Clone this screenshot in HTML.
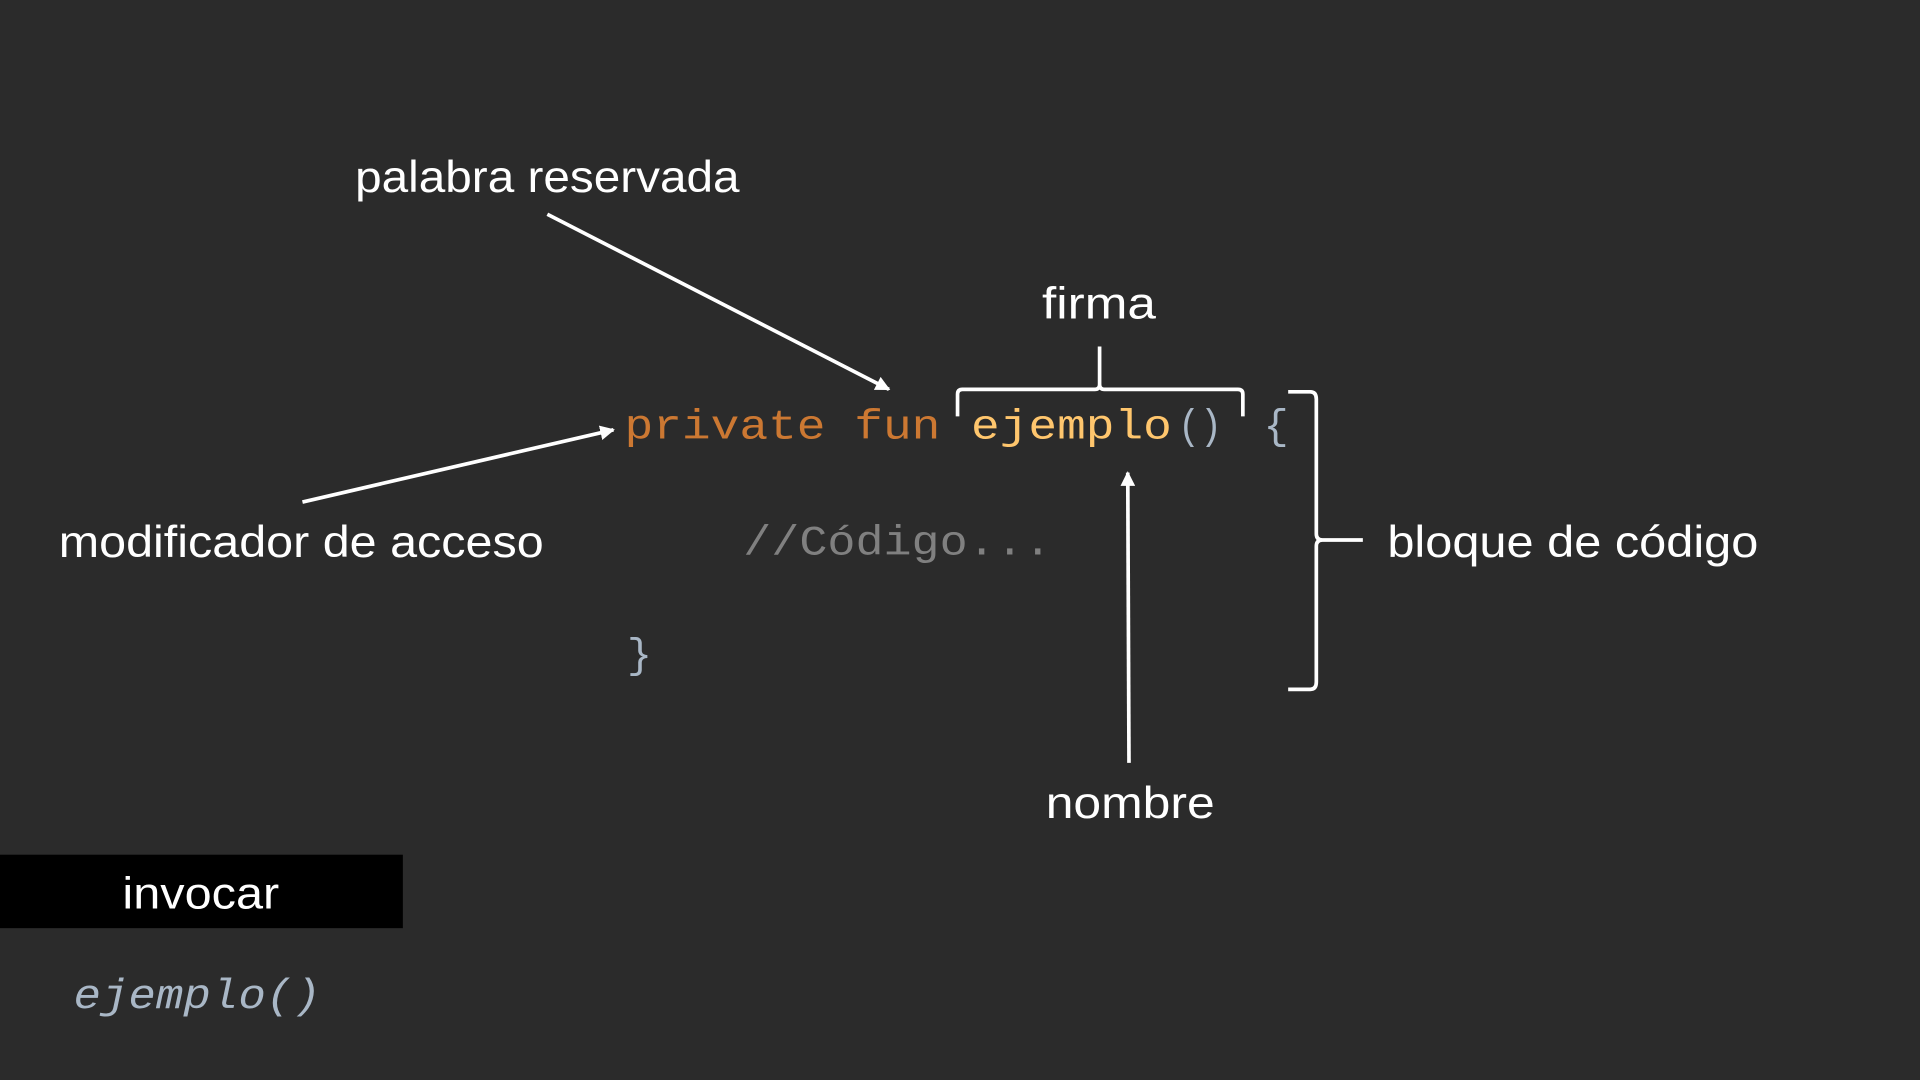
<!DOCTYPE html>
<html><head><meta charset="utf-8"><style>
html,body{margin:0;padding:0;background:#2b2b2b;width:1920px;height:1080px;overflow:hidden}
svg{display:block}
.t{font-family:"Liberation Sans",sans-serif;fill:#fff;font-size:36px}
.m{font-family:"Liberation Mono",monospace;font-size:34px}
</style></head><body>
<svg width="1920" height="1080" viewBox="0 0 1568 882" xmlns="http://www.w3.org/2000/svg">
<defs><marker id="a" viewBox="0 0 10 10" refX="9" refY="5" markerWidth="4" markerHeight="4" orient="auto"><path d="M0,0L10,5L0,10z" fill="#fff"/></marker></defs>
<rect width="1568" height="882" fill="#2b2b2b"/>
<text class="t" x="290" y="157" textLength="314" lengthAdjust="spacingAndGlyphs">palabra reservada</text>
<text class="t" x="851" y="260" textLength="93" lengthAdjust="spacingAndGlyphs">firma</text>
<text class="t" x="48" y="455" textLength="396" lengthAdjust="spacingAndGlyphs">modificador de acceso</text>
<text class="t" x="1133" y="455" textLength="303" lengthAdjust="spacingAndGlyphs">bloque de código</text>
<text class="t" x="854" y="668" textLength="138" lengthAdjust="spacingAndGlyphs">nombre</text>
<text class="m" x="510" y="358" fill="#cc7832" textLength="258" lengthAdjust="spacingAndGlyphs">private fun</text>
<text class="m" x="793" y="358" fill="#ffc66d" textLength="164" lengthAdjust="spacingAndGlyphs">ejemplo</text>
<text class="m" x="962" y="358" fill="#a9b7c6" textLength="36" lengthAdjust="spacingAndGlyphs">()</text>
<text class="m" x="1032" y="358" fill="#a9b7c6">{</text>
<text class="m" x="607" y="453" fill="#808080" textLength="252" lengthAdjust="spacingAndGlyphs">//Código...</text>
<text class="m" x="512" y="545" fill="#a9b7c6">}</text>
<g stroke="#fff" stroke-width="3" fill="none">
<line x1="447" y1="175" x2="726" y2="318" marker-end="url(#a)"/>
<line x1="247" y1="410" x2="501" y2="351" marker-end="url(#a)"/>
<line x1="922" y1="623" x2="921" y2="386" marker-end="url(#a)"/>
<path d="M782,340 V322 Q782,318 786,318 H894 Q898,318 898,314 V283 M898,314 Q898,318 902,318 H1011 Q1015,318 1015,322 V340"/>
<path d="M1052,320 H1070 Q1075,320 1075,326 V436 Q1075,441 1080,441 H1113 M1080,441 Q1075,441 1075,446 V557 Q1075,563 1070,563 H1052"/>
</g>
<rect x="0" y="698" width="329" height="60" fill="#000"/>
<text class="t" x="164" y="742" text-anchor="middle" textLength="128" lengthAdjust="spacingAndGlyphs">invocar</text>
<text class="m" x="60" y="823" fill="#a9b7c6" font-style="italic" textLength="202" lengthAdjust="spacingAndGlyphs">ejemplo()</text>
</svg>
</body></html>
